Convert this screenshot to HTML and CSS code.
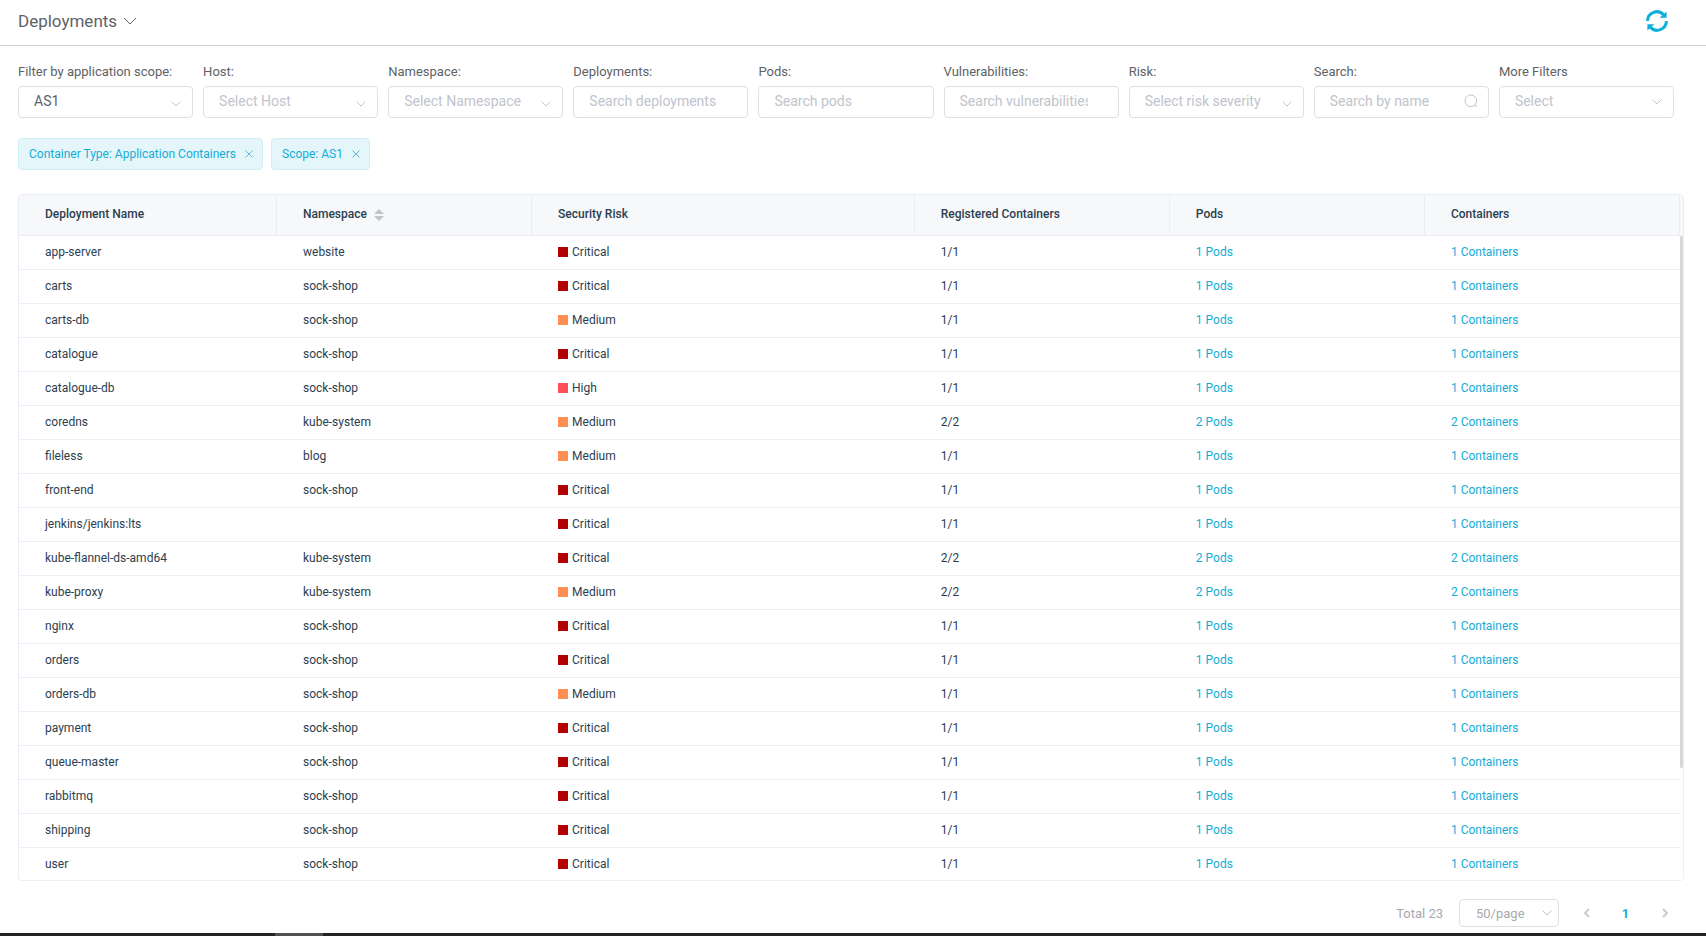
FILE: index.html
```html
<!DOCTYPE html>
<html lang="en">
<head>
<meta charset="utf-8">
<title>Deployments</title>
<link rel="stylesheet" href="styles.css">
</head>
<body>
<header class="topbar">
  <button class="title-menu" type="button">Deployments
    <svg class="title-chevron" viewBox="0 0 14 8" aria-hidden="true"><path d="M1 1l6 6 6-6"/></svg>
  </button>
  <button class="refresh" type="button" aria-label="Refresh">
    <svg viewBox="0 0 22 22" aria-hidden="true"><path class="arc" d="M1.6 11A9.2 9.2 0 0 1 17.8 5M20.4 11A9.2 9.2 0 0 1 4.2 17"/><path class="tip" d="M20.6 1.6v6.2h-7zM1.4 20.4v-6.2h7z"/></svg>
  </button>
</header>
<main class="content">
  <form class="filters" id="filters"></form>
  <div class="tags">
    <span class="tag">Container Type: Application Containers<button class="tag-close" type="button" aria-label="Remove container type"><svg viewBox="0 0 8 8" aria-hidden="true"><path d="M.5.5l7 7M7.5.5l-7 7"/></svg></button></span>
    <span class="tag">Scope: AS1<button class="tag-close" type="button" aria-label="Remove scope"><svg viewBox="0 0 8 8" aria-hidden="true"><path d="M.5.5l7 7M7.5.5l-7 7"/></svg></button></span>
  </div>
  <div class="table-box">
    <table class="grid">
      <colgroup><col class="c-name"><col class="c-std"><col class="c-risk"><col class="c-std"><col class="c-std"><col class="c-std"><col class="c-gutter"></colgroup>
      <thead><tr>
        <th>Deployment Name</th>
        <th>Namespace<svg class="sort" viewBox="0 0 10 12" aria-hidden="true"><path d="M5 0l5 5H0zM0 7h10l-5 5z"/></svg></th>
        <th>Security Risk</th><th>Registered Containers</th><th>Pods</th><th>Containers</th><th class="gutter"></th>
      </tr></thead>
      <tbody id="rows"></tbody>
    </table>
    <div class="scroll-thumb"></div>
  </div>
  <nav class="pager" aria-label="Pagination">
    <span>Total 23</span>
    <span class="field pager-size"><select aria-label="Rows per page"><option>50/page</option></select><svg class="chevron" viewBox="0 0 10 6" aria-hidden="true"><path d="M.5.5L5 5 9.5.5"/></svg></span>
    <button class="page" type="button" aria-label="Previous page"><svg viewBox="0 0 6 10" aria-hidden="true"><path d="M5 1L1 5l4 4"/></svg></button>
    <button class="page current" type="button">1</button>
    <button class="page" type="button" aria-label="Next page"><svg viewBox="0 0 6 10" aria-hidden="true"><path d="M1 1l4 4-4 4"/></svg></button>
  </nav>
</main>
<footer class="strip"><span class="strip-active"></span></footer>
<script src="app.js"></script>
</body>
</html>
```
FILE: styles.css
```css
* { box-sizing: border-box; }
body {
  margin: 0;
  min-height: 100vh;
  display: flex;
  flex-direction: column;
  background: #fff;
  color: #2c3e50;
  font-family: Roboto, "Liberation Sans", sans-serif;
  font-size: 12px;
}
button, input, select { font: inherit; }
button { border: 0; padding: 0; background: none; cursor: pointer; }
svg { fill: none; stroke: currentColor; }
a { color: #14acd6; text-decoration: none; }

.topbar {
  display: flex;
  align-items: center;
  justify-content: space-between;
  height: 46px;
  padding: 0 38px 3px 18px;
  border-bottom: 1px solid #cbd3dc;
}
.title-menu { display: flex; align-items: center; gap: 6px; color: #606266; font-size: 17px; }
.title-chevron { width: 14px; height: 8px; }
.refresh { display: flex; color: #0fb0da; }
.refresh svg { width: 22px; height: 22px; }
.refresh .arc { stroke-width: 3; }
.refresh .tip { fill: currentColor; stroke: none; }

.content { flex: 1; display: flex; flex-direction: column; padding: 17px 22px 0 18px; }
.filters {
  display: grid;
  grid-template-columns: repeat(9, minmax(0, 1fr));
  gap: 10px;
  margin-right: 10px;
}
.filter { display: flex; flex-direction: column; gap: 5px; }
.filter label { color: #606266; font-size: 13px; line-height: 18px; }
.field { position: relative; display: flex; }
.field input, .field select {
  appearance: none;
  width: 100%;
  height: 32px;
  padding: 0 30px 2px 15px;
  border: 1px solid #dcdfe6;
  border-radius: 4px;
  background: #fff;
  color: #606266;
  font-size: 14px;
  outline: 0;
}
.field select.empty { color: #c0c4cc; }
.field input::placeholder { color: #c0c4cc; opacity: 1; }
.chevron { position: absolute; right: 12px; top: 15px; width: 10px; height: 6px; color: #c0c4cc; pointer-events: none; }
.filter:last-child .chevron { top: 13px; }
.lens { position: absolute; right: 11px; top: 8px; width: 14px; height: 14px; color: #c0c4cc; pointer-events: none; }

.tags { display: flex; gap: 8px; margin: 20px 0 24px; }
.tag {
  display: flex;
  align-items: center;
  gap: 9px;
  height: 32px;
  padding: 0 9px 1px 10px;
  border: 1px solid #cfeff8;
  border-radius: 4px;
  background: #e5f6fb;
  color: #14acd6;
}
.tag-close { display: flex; color: #5fbcdc; }
.tag-close svg { width: 8px; height: 8px; }

.table-box { position: relative; overflow: hidden; border: 1px solid #ebeef5; border-radius: 4px; }
.grid { width: 100%; table-layout: fixed; border-collapse: separate; border-spacing: 0; }
.c-name { width: 258px; }
.c-risk { width: 23%; }
.c-gutter { width: 3px; }
.grid th, .grid td {
  height: 34px;
  padding: 0 0 2px 26px;
  border-bottom: 1px solid #ebeef5;
  text-align: left;
  line-height: 16px;
}
.grid th { height: 41px; background: #f6f8fa; border-right: 1px solid #ebeef5; font-weight: 500; }
.grid th.gutter { padding: 0; border-right: 0; }
.grid tbody tr:last-child td { height: 32px; padding-bottom: 0; border-bottom: 0; }
.grid tbody td:last-child { border-right: 0; }
.sort { width: 10px; height: 12px; margin-left: 7px; vertical-align: -3px; fill: #c0c4cc; stroke: none; }
.risk { display: flex; align-items: center; gap: 4px; }
.risk::before { content: ""; width: 10px; height: 10px; background: #b30000; }
.risk.medium::before { background: #ff8f50; }
.risk.high::before { background: #ff4f5a; }
.scroll-thumb { position: absolute; top: 41px; right: 0; width: 3px; height: 532px; border-radius: 2px; background: #d8d8d8; }

.pager { display: flex; align-items: center; justify-content: flex-end; gap: 16px; margin: 18px 8px 0 0; color: #a6a9ad; font-size: 13px; }
.pager-size { width: 100px; }
.pager-size select { height: 28px; padding: 0 20px 0 16px; font-size: 13px; color: #a6a9ad; }
.pager-size .chevron { right: 7px; top: 11px; }
.page { display: flex; align-items: center; justify-content: center; width: 23px; height: 28px; color: #c8cbd2; }
.page svg { width: 6px; height: 10px; stroke-width: 2; }
.page.current { color: #14acd6; font-weight: 700; }

.strip { height: 3px; padding-left: 275px; background: #20251f; }
.strip-active { display: block; width: 48px; height: 3px; background: #4f534e; }
```
FILE: app.js
```javascript
const chevron = '<svg class="chevron" viewBox="0 0 10 6" aria-hidden="true"><path d="M.5.5L5 5 9.5.5"/></svg>';
const lens = '<svg class="lens" viewBox="0 0 14 14" aria-hidden="true"><circle cx="6.8" cy="6.8" r="5.8"/><path d="M10.6 11l2.4 2"/></svg>';
const filters = [
  ["Filter by application scope:", "select", "AS1"],
  ["Host:", "empty", "Select Host"],
  ["Namespace:", "empty", "Select Namespace"],
  ["Deployments:", "input", "Search deployments"],
  ["Pods:", "input", "Search pods"],
  ["Vulnerabilities:", "input", "Search vulnerabilities"],
  ["Risk:", "empty", "Select risk severity"],
  ["Search:", "search", "Search by name"],
  ["More Filters", "empty", "Select"]
];
document.getElementById("filters").innerHTML = filters.map(([label, kind, text], i) => {
  const isInput = kind === "input" || kind === "search";
  const control = isInput
    ? `<input id="f${i}" type="text" placeholder="${text}">` + (kind === "search" ? lens : "")
    : `<select id="f${i}" class="${kind}"><option>${text}</option></select>${chevron}`;
  return `<div class="filter"><label for="f${i}">${label}</label><span class="field">${control}</span></div>`;
}).join("");

const rows = [
  ["app-server", "website", "Critical", 1],
  ["carts", "sock-shop", "Critical", 1],
  ["carts-db", "sock-shop", "Medium", 1],
  ["catalogue", "sock-shop", "Critical", 1],
  ["catalogue-db", "sock-shop", "High", 1],
  ["coredns", "kube-system", "Medium", 2],
  ["fileless", "blog", "Medium", 1],
  ["front-end", "sock-shop", "Critical", 1],
  ["jenkins/jenkins:lts", "", "Critical", 1],
  ["kube-flannel-ds-amd64", "kube-system", "Critical", 2],
  ["kube-proxy", "kube-system", "Medium", 2],
  ["nginx", "sock-shop", "Critical", 1],
  ["orders", "sock-shop", "Critical", 1],
  ["orders-db", "sock-shop", "Medium", 1],
  ["payment", "sock-shop", "Critical", 1],
  ["queue-master", "sock-shop", "Critical", 1],
  ["rabbitmq", "sock-shop", "Critical", 1],
  ["shipping", "sock-shop", "Critical", 1],
  ["user", "sock-shop", "Critical", 1]
];
document.getElementById("rows").innerHTML = rows.map(([name, ns, risk, n]) =>
  `<tr><td>${name}</td><td>${ns}</td><td><span class="risk ${risk.toLowerCase()}">${risk}</span></td>` +
  `<td>${n}/${n}</td><td><a href="#">${n} Pods</a></td><td><a href="#">${n} Containers</a></td></tr>`
).join("");
```
